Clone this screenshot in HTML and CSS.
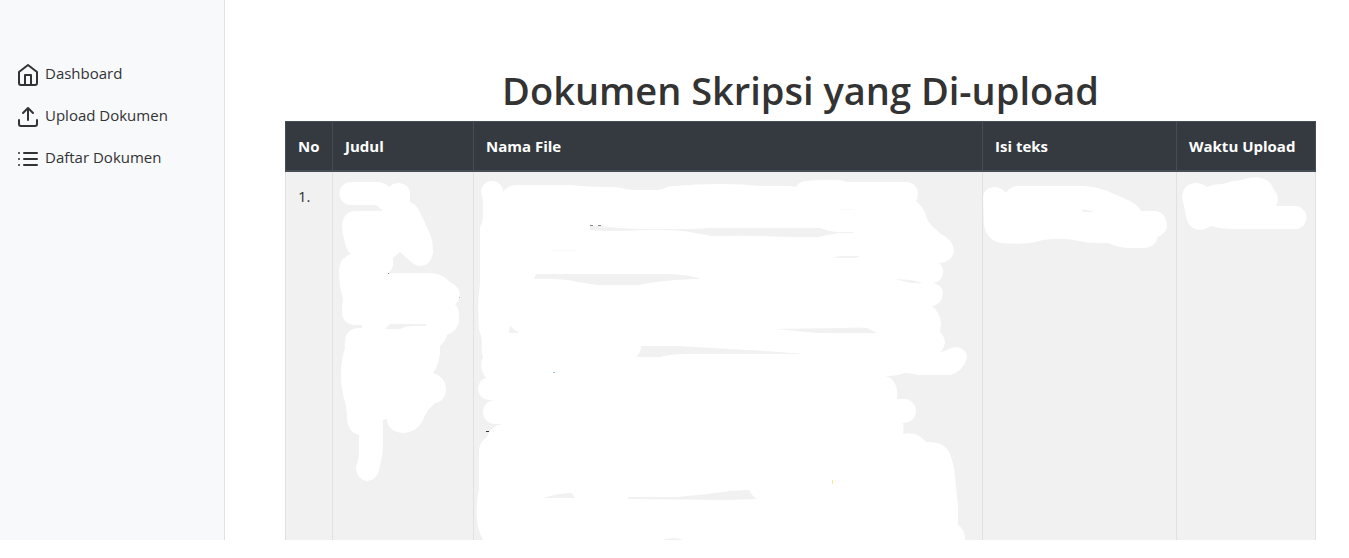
FILE: index.html
```html
<!DOCTYPE html>
<html lang="id">
<head>
<meta charset="utf-8">
<title>Daftar Dokumen</title>
<link rel="stylesheet" href="styles.css">
</head>
<body>
<div class="layout">
  <nav class="sidebar">
    <a class="nav-link" href="#dashboard">
      <svg class="icon" viewBox="0 0 24 24" aria-hidden="true"><path d="M3 9l9-7 9 7v11a2 2 0 0 1-2 2H5a2 2 0 0 1-2-2z"/><path d="M9 22V12h6v10"/></svg>
      <span>Dashboard</span>
    </a>
    <a class="nav-link" href="#upload">
      <svg class="icon" viewBox="0 0 24 24" aria-hidden="true"><path d="M21 15v4a2 2 0 0 1-2 2H5a2 2 0 0 1-2-2v-4"/><path d="M17 8l-5-5-5 5M12 3v12"/></svg>
      <span>Upload Dokumen</span>
    </a>
    <a class="nav-link" href="#daftar">
      <svg class="icon" viewBox="0 0 24 24" aria-hidden="true"><path d="M8 6h13M8 12h13M8 18h13M3 6h.01M3 12h.01M3 18h.01"/></svg>
      <span>Daftar Dokumen</span>
    </a>
  </nav>
  <main class="content">
    <h1 class="title">Dokumen Skripsi yang Di-upload</h1>
    <table class="table">
      <colgroup><col class="col-no"><col class="col-judul"><col><col class="col-isi"><col class="col-waktu"></colgroup>
      <thead>
        <tr><th scope="col">No</th><th scope="col">Judul</th><th scope="col">Nama File</th><th scope="col">Isi teks</th><th scope="col">Waktu Upload</th></tr>
      </thead>
      <tbody>
        <tr>
          <td>1.</td>
          <td class="masked">
            <svg class="mask" viewBox="333 172 140 368" aria-hidden="true">
              <path class="paint" d="M351 182H376Q385 182 389 187Q393 183 399 183Q410 184 410 195V202Q416 204 420 212L430 234Q433 240 433 253Q431 265 421 266Q415 266 410 261L400 252L393 258V265Q392 270 389 273H432Q443 274 450 282Q460 287 460 295Q460 300 455 304Q459 308 459 315V322Q457 331 447 335Q446 341 440 346Q441 362 433 373Q446 377 446 390Q445 402 435 403Q429 408 425 415Q420 432 403 433Q388 432 387 419L383 420V444Q383 455 380 466Q378 480 367 481Q356 479 356 467Q359 460 359 453V435Q348 432 347 420Q347 406 343 395Q338 370 345 348Q343 329 358 328H362V325H354Q342 323 342 312Q342 305 343 298Q339 287 339 270Q340 257 351 254Q346 250 345 243Q342 234 342 225Q343 212 355 211H383L376 205H351A11 11 0 0 1 351 182Z"/>
              <path class="gap" d="M390 324H426V326Q407 325 400 329H385Z"/>
              <path class="trace-gray" d="M388 273h1v1h-1z"/>
              <path class="trace-blue" d="M459 297h1v1h-1z"/>
            </svg>
          </td>
          <td class="masked">
            <svg class="mask" viewBox="474 172 508 368" preserveAspectRatio="xMinYMin meet" aria-hidden="true">
              <path class="paint" d="M481 192A11 11 0 0 1 503 192Q508 185 517 185H572Q585 187 612 187C622 187 626 190 635 190H657C664 190 665 186 675 186Q695 184 720 184T760 186H790L796 187Q798 182 806 181Q837 178 847 182H907Q917 183 918 193Q918 198 916 201Q922 206 925 212Q927 222 933 227L941 234Q953 240 954 250Q953 262 939 263Q943 266 943 273Q942 282 933 283Q943 285 943 294Q942 304 932 306Q940 312 941 323L940 332Q944 335 945 342Q944 349 940 352Q945 352 949 349Q953 347 957 347Q967 349 967 358Q963 372 950 375H924C912 375 914 373 904 373Q898 376 886 376Q899 381 897 399H905A12 12 0 0 1 903 423Q904 429 903 434Q917 431 926 442Q947 441 951 457Q954 465 955 477L958 507V525Q965 529 965 540H483Q475 525 477 505Q477 497 479 490V450Q480 441 487 437Q490 426 502 424H495A12 12 0 0 1 495 400H489C475 399 475 381 486 378Q478 367 483 357Q481 352 482 345Q482 336 479 330Q477 305 480 283V227Q483 222 483 215V202Z"/>
              <path class="gap" d="M590 226H602Q610 228 643 229H680Q700 229 708 228H820Q828 231 836 232H853V233H838L818 237H790Q750 235 712 236L695 233Q675 229 643 230Q610 232 590 230Z"/>
              <path class="gap" d="M536 274H660Q690 274 700 279Q660 280 640 285H597L578 282Q560 278 534 279Z"/>
              <path class="gap" d="M510 325Q513 330 519 332L517 333H509Z"/>
              <path class="gap" d="M641 346H677L730 349Q780 352 803 354H690Q670 354 660 357H636Q641 353 641 346Z"/>
              <path class="gap" d="M775 329L840 328Q860 327 867 328L877 333H817Z"/>
              <path class="gap" d="M895 279L911 280L923 283H911ZM833 258L840 256H860L855 258Z"/>
              <path class="gap" d="M543 498Q560 493 572 493L575 498ZM628 497H677Q710 494 730 491L749 490Q751 495 757 499L728 500L628 499ZM662 540Q675 536 683 540Z"/>
              <path class="gap-faint" d="M553 250h24v1h-24zM841 209h13v1h-13z"/>
              <path class="trace-gray" d="M590 225h3v1h-3zM598 225h3v1h-3z"/>
              <path class="trace-dark" d="M486 431h3v1h-3z"/>
              <path class="trace-blue" d="M553 372h2v1h-2z"/>
              <path class="trace-yellow" d="M832 480h1v4h-1z"/>
            </svg>
          </td>
          <td class="masked">
            <svg class="mask" viewBox="983 172 193 368" aria-hidden="true">
              <path class="paint" d="M983 197Q984 188 994 187Q1002 187 1006 193Q1010 186 1018 186H1082Q1098 186 1114 194Q1138 203 1141 211H1155Q1166 212 1167 225Q1167 233 1158 237Q1156 247 1144 248H1128Q1120 248 1108 243Q1090 244 1080 241Q1055 236 1036 242Q1020 245 1000 243Q987 240 984 225Z"/>
              <path class="gap" d="M1082 209L1095 212H1083Z"/>
            </svg>
          </td>
          <td class="masked">
            <svg class="mask" viewBox="1177 172 138 368" aria-hidden="true">
              <path class="paint" d="M1182 197Q1183 184 1195 183Q1202 183 1207 187Q1212 184 1223 184Q1230 181 1241 180Q1262 173 1271 184Q1273 189 1277 194Q1279 201 1276 206H1295A11 11 0 0 1 1295 229H1235Q1220 229 1211 226Q1207 229 1200 230Q1188 229 1186 216Z"/>
            </svg>
          </td>
        </tr>
      </tbody>
    </table>
  </main>
</div>
</body>
</html>
```
FILE: styles.css
```css
* { box-sizing: border-box; }

body {
  margin: 0;
  background: #fff;
  color: #333;
  font: 15px/24px "Open Sans", "Noto Sans", sans-serif;
}

.layout {
  display: flex;
  height: calc(100vh - 18px);
  overflow: hidden;
}

.sidebar {
  flex: 0 0 225px;
  padding: 54px 16px;
  border-right: 1px solid #dee2e6;
  background: #f8f9fb;
}

.nav-link {
  display: flex;
  align-items: flex-start;
  gap: 5px;
  height: 42px;
  padding-top: 9px;
  color: #333;
  line-height: 20px;
  text-decoration: none;
}

.icon {
  width: 24px;
  height: 24px;
  fill: none;
  stroke: #333;
  stroke-width: 2;
  stroke-linecap: round;
  stroke-linejoin: round;
}

.content {
  flex: 1;
  min-width: 0;
  padding: 66px 33px 0 60px;
}

.title {
  margin: 0 0 7px;
  font-size: 38px;
  font-weight: 600;
  line-height: 48px;
  text-align: center;
}

.table {
  width: 100%;
  border-collapse: collapse;
  table-layout: fixed;
}

.col-no { width: 47px; }
.col-judul { width: 141px; }
.col-isi { width: 194px; }
.col-waktu { width: 139px; }

.table th,
.table td {
  padding: 12px;
  border: 1px solid #dee2e6;
  text-align: left;
  vertical-align: top;
}

.table th {
  border-color: #454d55;
  border-bottom-width: 2px;
  background: #343a40;
  color: #fff;
  font-weight: 700;
  white-space: nowrap;
}

.table td { background: #f1f1f1; }
.table .masked { padding: 0; }

.mask {
  display: block;
  width: 100%;
  overflow: visible;
}

.paint { fill: #fff; }
.gap { fill: #f1f1f1; }
.gap-faint { fill: #f9f9f9; }
.trace-gray { fill: #888; }
.trace-dark { fill: #333; }
.trace-blue { fill: #8cc4e8; }
.trace-yellow { fill: #f5eb96; }
```
